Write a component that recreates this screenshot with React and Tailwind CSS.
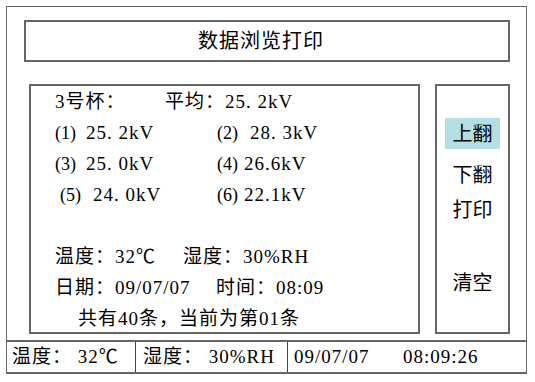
import React from 'react';

const font = "font-['Liberation_Serif','Noto_Sans_CJK_SC',serif]";

const Row = ({ children, className = '' }) => (
    <div className={`flex h-[31px] items-center whitespace-pre ${className}`}>{children}</div>
);

// reading number like "(1) 25. 2kV"
const Reading = ({ label, value, labelWidth, className = '' }) => (
    <span className={`flex items-center ${className}`}>
        <span className={`text-[18px] tracking-normal ${labelWidth}`}>{label}</span>
        <span>{value}</span>
    </span>
);

const App = () => {
    return (
        <div className={`w-[535px] h-[382px] bg-white text-black ${font}`}>
            <div className="pt-[6px] pl-[6px]">
                <div className="w-[521px] h-[368px] border border-b-2 border-[#666] flex flex-col">
                    {/* title */}
                    <div className="ml-[17px] mt-[13px] w-[486px] h-[42px] border-2 border-[#666] flex items-center justify-center pr-[12px]">
                        <h1 className="text-[20px] leading-none tracking-[1px]">数据浏览打印</h1>
                    </div>

                    <div className="flex mt-[22px] ml-[22px]">
                        {/* records */}
                        <div className="w-[391px] h-[250px] border-2 border-[#666] pl-[24px] pt-[1px] text-[19px] tracking-[1px]">
                            <Row>
                                <span className="w-[110px]">3号杯：</span>
                                <span>平均：25. 2kV</span>
                            </Row>
                            <Row>
                                <Reading label="(1)" value="25. 2kV" labelWidth="w-[31px]" className="w-[162px]" />
                                <Reading label="(2)" value="28. 3kV" labelWidth="w-[33px]" />
                            </Row>
                            <Row>
                                <Reading label="(3)" value="25. 0kV" labelWidth="w-[31px]" className="w-[162px]" />
                                <Reading label="(4)" value="26.6kV" labelWidth="w-[27px]" />
                            </Row>
                            <Row>
                                <Reading label="(5)" value="24. 0kV" labelWidth="w-[33px]" className="w-[162px] pl-[5px]" />
                                <Reading label="(6)" value="22.1kV" labelWidth="w-[27px]" />
                            </Row>
                            <Row />
                            <Row>
                                <span className="w-[128px]">温度：32℃</span>
                                <span>湿度：30%RH</span>
                            </Row>
                            <Row>
                                <span className="w-[161px]">日期：09/07/07</span>
                                <span>时间：08:09</span>
                            </Row>
                            <Row className="pl-[23px]">共有40条，当前为第01条</Row>
                        </div>

                        {/* buttons */}
                        <div className="ml-[15px] w-[75px] h-[250px] border-2 border-[#666] flex flex-col items-center text-[20px]">
                            <div className="mt-[32px] w-[55px] h-[31px] bg-[#b3dfe3] flex items-center justify-center">上翻</div>
                            <div className="mt-[10px] h-[31px] flex items-center">下翻</div>
                            <div className="mt-[4px] h-[31px] flex items-center">打印</div>
                            <div className="mt-[42px] h-[31px] flex items-center">清空</div>
                        </div>
                    </div>

                    {/* status bar */}
                    <div className="mt-auto h-[32px] border-t-2 border-[#666] flex text-[19px] tracking-[1px] whitespace-pre">
                        <div className="w-[129px] border-r border-[#444] pl-[5px] flex items-center">温度： 32℃</div>
                        <div className="w-[152px] border-r border-[#444] pl-[7px] flex items-center">湿度： 30%RH</div>
                        <div className="pl-[6px] flex items-center">
                            <span className="w-[109px]">09/07/07</span>
                            <span>08:09:26</span>
                        </div>
                    </div>
                </div>
            </div>
        </div>
    );
};

export default App;
